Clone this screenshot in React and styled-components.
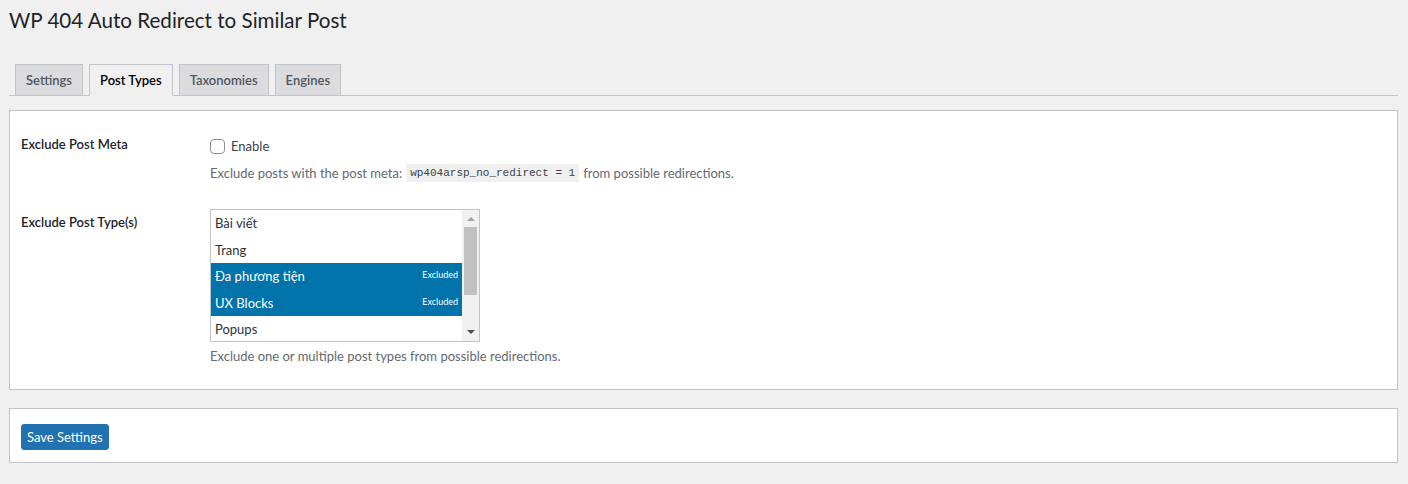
import React from "react";
import styled, { createGlobalStyle } from "styled-components";

const Global = createGlobalStyle`
  html, body { margin: 0; padding: 0; }
  body {
    background: #f0f0f1;
    font-family: Lato, "Liberation Sans", Arial, sans-serif;
    font-size: 13px;
    color: #3c434a;
  }
  * { box-sizing: border-box; }
`;

const Wrap = styled.div`
  padding: 5px 10px 20px 9px;
`;

const Title = styled.h1`
  margin: 0;
  font-size: 20.6px;
  font-weight: 400;
  line-height: 30px;
  color: #1d2327;
`;

const TabBar = styled.nav`
  margin-top: 29px;
  display: flex;
  align-items: flex-end;
  border-bottom: 1px solid #c3c4c7;
`;

const Tab = styled.a`
  margin-left: 6px;
  margin-bottom: -1px;
  padding: 5px 10px;
  font-size: 13px;
  font-weight: 600;
  line-height: 20px;
  text-decoration: none;
  border: 1px solid #c3c4c7;
  background: ${(p) => (p.$active ? "#f0f0f1" : "#dcdcde")};
  border-bottom-color: ${(p) => (p.$active ? "#f0f0f1" : "#c3c4c7")};
  color: ${(p) => (p.$active ? "#000" : "#50575e")};
  white-space: nowrap;
`;

const Panel = styled.section`
  margin-top: ${(p) => p.$mt}px;
  background: #fff;
  border: 1px solid #c3c4c7;
  padding: ${(p) => p.$pad};
`;

const FormGrid = styled.div`
  display: grid;
  grid-template-columns: 189px 1fr;
  row-gap: 26px;
`;

const Label = styled.div`
  font-weight: 600;
  color: #1d2327;
  line-height: 17px;
  padding-top: ${(p) => p.$pt}px;
`;

const Field = styled.div`
  display: flex;
  flex-direction: column;
  align-items: flex-start;
`;

const CheckRow = styled.label`
  display: flex;
  align-items: center;
  gap: 6px;
  color: #3c434a;
  line-height: 20px;
`;

const Box = styled.span`
  width: 15px;
  height: 15px;
  border: 1px solid #8c8f94;
  border-radius: 4px;
  background: #fff;
  display: inline-block;
`;

const Desc = styled.p`
  margin: ${(p) => p.$mt}px 0 0;
  color: #646970;
  line-height: 20px;
  display: flex;
  align-items: center;
`;

const Code = styled.code`
  font-family: "Liberation Mono", "DejaVu Sans Mono", monospace;
  font-size: 11px;
  background: #f0f0f1;
  color: #3c434a;
  padding: 2px 4px;
  margin: 0 4px 0 4px;
  line-height: 14px;
`;

const ListBox = styled.div`
  width: 270px;
  height: 133px;
  border: 1px solid #c3c4c7;
  display: flex;
  overflow: hidden;
  background: #fff;
`;

const Options = styled.div`
  flex: 1;
  display: flex;
  flex-direction: column;
`;

const Option = styled.div`
  flex: 0 0 26.5px;
  display: flex;
  justify-content: space-between;
  align-items: center;
  padding: 0 4px;
  color: ${(p) => (p.$selected ? "#fff" : "#2c3338")};
  background: ${(p) => (p.$selected ? "#0073aa" : "transparent")};
  font-size: 13px;
`;

const Badge = styled.span`
  font-size: 9px;
  align-self: flex-start;
  margin-top: 6px;
`;

const Scrollbar = styled.div`
  width: 17px;
  background: #f1f1f1;
  display: flex;
  flex-direction: column;
  align-items: center;
`;

const Arrow = styled.div`
  height: 17px;
  width: 17px;
  display: flex;
  align-items: center;
  justify-content: center;
`;

const Thumb = styled.div`
  width: 13px;
  height: 68px;
  background: #c1c1c1;
`;

const Spacer = styled.div`
  flex: 1;
`;

const SaveButton = styled.button`
  font-family: inherit;
  font-size: 13px;
  color: #fff;
  background: #2271b1;
  border: 1px solid #2271b1;
  border-radius: 3px;
  height: 26px;
  padding: 0 5px;
  line-height: 24px;
  cursor: pointer;
`;

const items = [
  { name: "Bài viết" },
  { name: "Trang" },
  { name: "Đa phương tiện", sel: true },
  { name: "UX Blocks", sel: true },
  { name: "Popups" },
];

export default function App() {
  return (
    <>
      <Global />
      <Wrap>
        <Title>WP 404 Auto Redirect to Similar Post</Title>
        <TabBar>
          <Tab>Settings</Tab>
          <Tab $active>Post Types</Tab>
          <Tab>Taxonomies</Tab>
          <Tab>Engines</Tab>
        </TabBar>
        <Panel $mt={14} $pad="25px 12px 23px 11px">
          <FormGrid>
            <Label $pt={0}>Exclude Post Meta</Label>
            <Field>
              <CheckRow>
                <Box />
                Enable
              </CheckRow>
              <Desc $mt={7}>
                Exclude posts with the post meta:
                <Code>wp404arsp_no_redirect = 1</Code>
                from possible redirections.
              </Desc>
            </Field>
            <Label $pt={5}>Exclude Post Type(s)</Label>
            <Field>
              <ListBox>
                <Options>
                  {items.map((it) => (
                    <Option key={it.name} $selected={it.sel}>
                      <span>{it.name}</span>
                      {it.sel && <Badge>Excluded</Badge>}
                    </Option>
                  ))}
                </Options>
                <Scrollbar>
                  <Arrow>
                    <svg width="8" height="5" viewBox="0 0 8 5">
                      <path d="M0 5 L4 1 L8 5 Z" fill="#a3a3a3" />
                    </svg>
                  </Arrow>
                  <Thumb />
                  <Spacer />
                  <Arrow>
                    <svg width="8" height="5" viewBox="0 0 8 5">
                      <path d="M0 0 L4 4 L8 0 Z" fill="#505050" />
                    </svg>
                  </Arrow>
                </Scrollbar>
              </ListBox>
              <Desc $mt={4}>Exclude one or multiple post types from possible redirections.</Desc>
            </Field>
          </FormGrid>
        </Panel>
        <Panel $mt={18} $pad="15px 11px 12px 11px">
          <SaveButton>Save Settings</SaveButton>
        </Panel>
      </Wrap>
    </>
  );
}
